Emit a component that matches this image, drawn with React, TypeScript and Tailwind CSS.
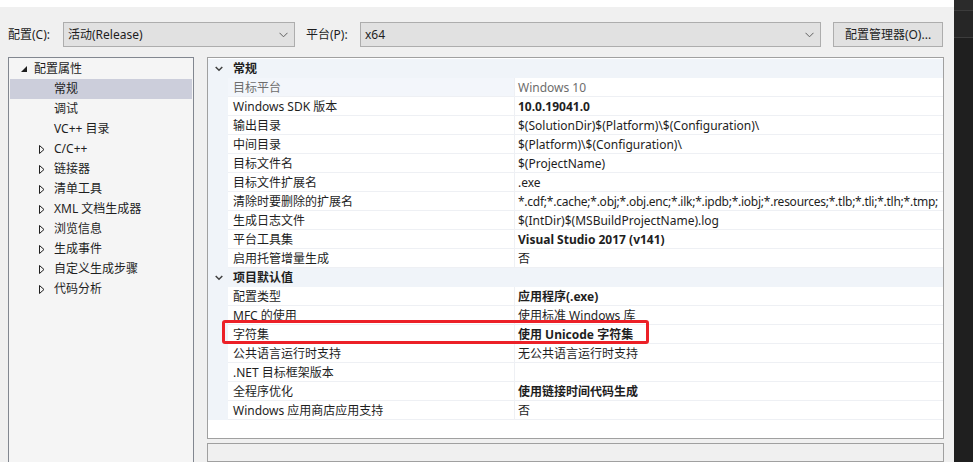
import React from "react";

const font = { fontFamily: '"Segoe UI","Noto Sans","Noto Sans CJK SC",sans-serif' };

function Chevron({ className = "" }: { className?: string }) {
  return (
    <svg width="9" height="6" viewBox="0 0 9 6" className={className}>
      <path d="M0.5 0.8 L4.5 4.8 L8.5 0.8" fill="none" stroke="#606060" strokeWidth="1" />
    </svg>
  );
}

function CatChevron() {
  return (
    <svg width="8" height="6" viewBox="0 0 8 6">
      <path d="M0.7 1 L4 4.3 L7.3 1" fill="none" stroke="#404040" strokeWidth="1.5" />
    </svg>
  );
}

function Collapsed() {
  return (
    <svg width="6" height="9" viewBox="0 0 6 9">
      <path d="M0.5 0.5 L5 4.5 L0.5 8.5 Z" fill="none" stroke="#1e1e1e" strokeWidth="1" />
    </svg>
  );
}

function Expanded() {
  return (
    <svg width="6" height="6" viewBox="0 0 6 6">
      <path d="M6 0 L6 6 L0 6 Z" fill="#1e1e1e" />
    </svg>
  );
}

type Row = { label: string; value: string; bold?: boolean; gray?: boolean; tight?: boolean };

const general: Row[] = [
  { label: "目标平台", value: "Windows 10", gray: true },
  { label: "Windows SDK 版本", value: "10.0.19041.0", bold: true },
  { label: "输出目录", value: "$(SolutionDir)$(Platform)\\$(Configuration)\\" },
  { label: "中间目录", value: "$(Platform)\\$(Configuration)\\" },
  { label: "目标文件名", value: "$(ProjectName)" },
  { label: "目标文件扩展名", value: ".exe" },
  {
    label: "清除时要删除的扩展名",
    value: "*.cdf;*.cache;*.obj;*.obj.enc;*.ilk;*.ipdb;*.iobj;*.resources;*.tlb;*.tli;*.tlh;*.tmp;",
    tight: true,
  },
  { label: "生成日志文件", value: "$(IntDir)$(MSBuildProjectName).log" },
  { label: "平台工具集", value: "Visual Studio 2017 (v141)", bold: true },
  { label: "启用托管增量生成", value: "否" },
];

const defaults: Row[] = [
  { label: "配置类型", value: "应用程序(.exe)", bold: true },
  { label: "MFC 的使用", value: "使用标准 Windows 库" },
  { label: "字符集", value: "使用 Unicode 字符集", bold: true },
  { label: "公共语言运行时支持", value: "无公共语言运行时支持" },
  { label: ".NET 目标框架版本", value: "" },
  { label: "全程序优化", value: "使用链接时间代码生成", bold: true },
  { label: "Windows 应用商店应用支持", value: "否" },
];

const treeChildren: { label: string; arrow: boolean; selected?: boolean }[] = [
  { label: "常规", arrow: false, selected: true },
  { label: "调试", arrow: false },
  { label: "VC++ 目录", arrow: false },
  { label: "C/C++", arrow: true },
  { label: "链接器", arrow: true },
  { label: "清单工具", arrow: true },
  { label: "XML 文档生成器", arrow: true },
  { label: "浏览信息", arrow: true },
  { label: "生成事件", arrow: true },
  { label: "自定义生成步骤", arrow: true },
  { label: "代码分析", arrow: true },
];

function PropRow({ r }: { r: Row }) {
  return (
    <div className="flex h-[19px] shrink-0">
      <div className="w-[20px] shrink-0 bg-[#f0f4f9]" />
      <div
        className={`w-[286px] shrink-0 pl-[5px] pt-[2px] flex items-center border-b border-[#eef0f4] whitespace-nowrap ${
          r.gray ? "bg-[#f3f6fb] text-[#6d6d6d]" : "bg-white text-[#1e1e1e]"
        }`}
      >
        {r.label}
      </div>
      <div
        className={`flex-1 min-w-0 overflow-hidden pl-[3px] pt-[2px] flex items-center border-b border-l border-[#eef0f4] bg-white whitespace-nowrap ${
          r.gray ? "text-[#6d6d6d]" : "text-[#1e1e1e]"
        } ${r.bold ? "font-bold" : ""} ${r.tight ? "tracking-[-0.25px]" : ""}`}
      >
        {r.value}
      </div>
    </div>
  );
}

function Category({ label }: { label: string }) {
  return (
    <div className="flex h-[19px] shrink-0 bg-[#f0f4f9] items-center">
      <div className="w-[20px] shrink-0 flex justify-center pl-[1px]">
        <CatChevron />
      </div>
      <div className="pl-[5px] font-bold text-[#1e1e1e]">{label}</div>
    </div>
  );
}

export default function App() {
  return (
    <div className="w-[973px] h-[462px] flex overflow-hidden text-[12px] leading-none" style={font}>
      <div className="w-[954px] shrink-0 bg-[#f0f0f0] flex flex-col relative">
        <div className="h-[7px] bg-white shrink-0" />
        {/* toolbar */}
        <div className="flex items-center mt-[15px] h-[25px] pl-[8px] text-[#1e1e1e]">
          <span className="w-[55px]">配置(C):</span>
          <div className="w-[232px] h-[25px] border border-[#adadad] bg-[#e1e1e1] flex items-center justify-between pl-[4px] pr-[6px]">
            <span>活动(Release)</span>
            <Chevron />
          </div>
          <span className="ml-[11px] w-[54px]">平台(P):</span>
          <div className="w-[461px] h-[25px] border border-[#adadad] bg-[#e1e1e1] flex items-center justify-between pl-[4px] pr-[6px]">
            <span>x64</span>
            <Chevron />
          </div>
          <div className="ml-[12px] w-[110px] h-[25px] border border-[#adadad] bg-[#e1e1e1] flex items-center justify-center">
            配置管理器(O)...
          </div>
        </div>
        {/* panels */}
        <div className="flex mt-[10px] pl-[8px] gap-[13px] flex-1 min-h-0">
          <div className="w-[186px] shrink-0 h-[420px] border border-[#828790] bg-[#f5f5f5] pt-[1px] pl-[1px] pr-[1px] text-[#1e1e1e]">
            <div className="flex items-center h-[20px]">
              <div className="w-[24px] flex justify-end pr-[7px]">
                <Expanded />
              </div>
              <span>配置属性</span>
            </div>
            {treeChildren.map((c) => (
              <div
                key={c.label}
                className={`flex items-center h-[20px] ${c.selected ? "bg-[#cccedb]" : ""}`}
              >
                <div className="w-[44px] flex justify-end pr-[9px]">{c.arrow ? <Collapsed /> : null}</div>
                <span>{c.label}</span>
              </div>
            ))}
          </div>
          <div className="flex flex-col">
            <div className="w-[737px] h-[398px] border border-[#a0a0a0] bg-white flex flex-col overflow-hidden pt-[1px]">
              <Category label="常规" />
              {general.map((r) => (
                <PropRow key={r.label} r={r} />
              ))}
              <Category label="项目默认值" />
              {defaults.map((r) => (
                <PropRow key={r.label} r={r} />
              ))}
            </div>
            <div className="w-[737px] h-[20px] mt-[4px] border border-[#a0a0a0] bg-[#f0f0f0]" />
          </div>
        </div>
        {/* red annotation */}
        <div className="absolute left-[222px] top-[320px] w-[427px] h-[24px] border-[3px] border-[#ec2027] rounded-[3px] pointer-events-none" />
      </div>
      <div className="flex-1 bg-[#1f1f1f] flex flex-col">
        <div className="h-[10px] bg-[#2b2b2b]" />
        <div className="h-[1px] bg-[#3c3c3c]" />
        <div className="h-[26px] bg-[#262626]" />
        <div className="h-[1px] bg-[#3c3c3c]" />
      </div>
    </div>
  );
}
